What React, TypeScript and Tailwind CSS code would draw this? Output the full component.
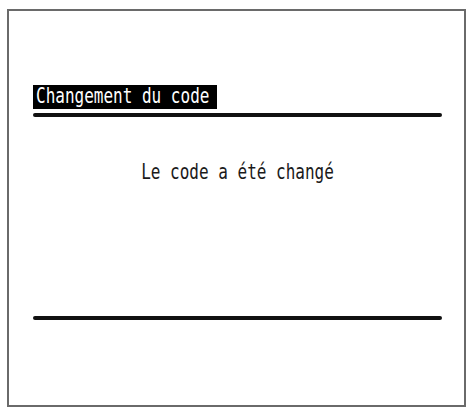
import React from "react";

export default function App() {
  const mono = { fontFamily: '"DejaVu Sans Mono", "Liberation Mono", monospace' };
  return (
    <div className="w-[470px] h-[409px] bg-white pt-[9px] pl-[7px]">
      <div className="w-[459px] h-[398px] border-2 border-[#6a6a6a] flex flex-col pl-[24px]">
        <div className="mt-[74px] w-[184px] h-[24px] bg-black flex items-center pl-[3px]">
          <span
            className="inline-block text-white text-[16px] leading-none scale-y-[1.3] tracking-[0px]"
            style={mono}
          >
            Changement du code
          </span>
        </div>
        <div className="mt-[4px] w-[409px] h-[4px] bg-[#111] rounded-full" />
        <div className="w-[409px] mt-[47px] flex justify-center pl-[0px]">
          <span
            className="inline-block text-[#1a1a1a] text-[16px] leading-none scale-y-[1.3]"
            style={mono}
          >
            Le code a été changé
          </span>
        </div>
        <div className="mt-[136px] w-[409px] h-[4px] bg-[#111] rounded-full" />
      </div>
    </div>
  );
}
